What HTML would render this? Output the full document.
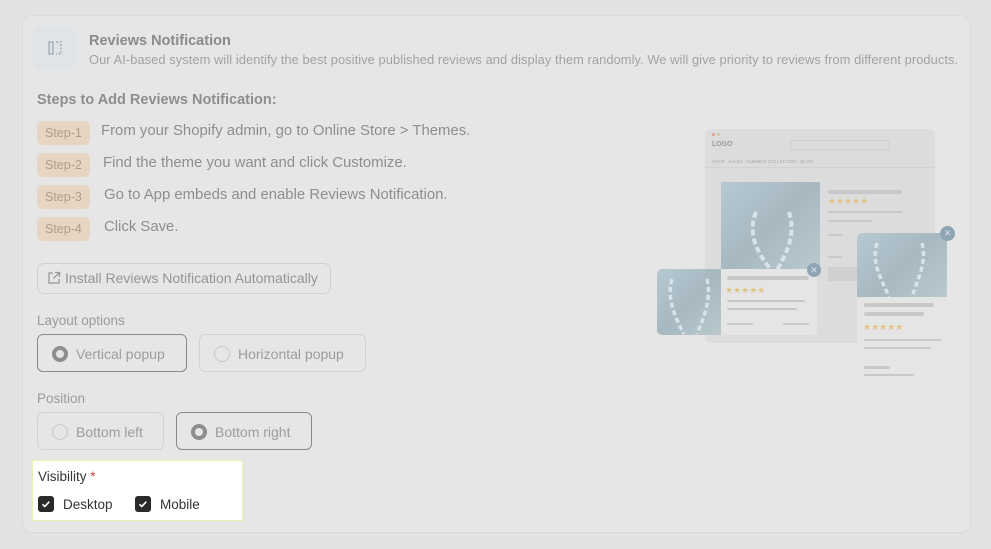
<!DOCTYPE html>
<html><head><meta charset="utf-8"><style>
*{box-sizing:border-box;margin:0;padding:0}
body{width:991px;height:549px;background:#e2e2e2;font-family:"Liberation Sans",sans-serif;position:relative;overflow:hidden;color:#8c8c8c}
.card{position:absolute;left:22px;top:15px;width:949px;height:518px;background:#e6e6e6;border:1px solid #dadada;border-radius:10px}
.abs{position:absolute}
.icon{left:33px;top:26px;width:44px;height:44px;border-radius:10px;background:#e1e4e6}
.title{left:89px;top:33px;font-size:14.5px;font-weight:bold;color:#8a8a8a}
.sub{left:89px;top:52px;font-size:12.86px;color:#a2a2a2;white-space:nowrap;letter-spacing:0.07px}
.steps{left:37px;top:92px;font-size:14.5px;font-weight:bold;color:#8e8e8e}
.step{left:37px;height:24px;padding:0 8px;line-height:24px;border-radius:6px;background:#e6d5c1;color:#ad9d8c;font-size:12.5px}
.st{font-size:14.9px;color:#8e8e8e;white-space:nowrap}
.btn{left:37px;top:263px;width:294px;height:31px;border:1px solid #d0d0d0;border-radius:7px;font-size:14px;color:#949494;line-height:29px;padding-left:27px}
.lbl{font-size:13.5px;color:#9a9a9a}
.opt{height:38px;border:1px solid #d2d2d2;border-radius:6px;font-size:14px;color:#9c9c9c;line-height:38px;padding-left:38px}
.opt.sel{border-color:#8a8a8a}
.opt i{position:absolute;left:14px;top:11px;width:16px;height:16px;border-radius:50%;border:1px solid #c8c8c8}
.opt.sel i{border:4px solid #8e8e8e;background:#e6e6e6}
.vis{left:32px;top:460px;width:211px;height:61px;background:#fff;border:1px solid #f0efb0}
.cb{position:absolute;width:16px;height:16px;border-radius:3px;background:#2a2a2a}
.bar{position:absolute;height:4px;background:#c8c8c8;border-radius:2px}
.star{position:absolute;color:#e0c48a;font-size:9px;letter-spacing:0}
.img{position:absolute;background:linear-gradient(135deg,#b6c9d2,#a7b8c1 50%,#b9c9cf);overflow:hidden}
</style></head><body>
<div class="card"></div>
<div class="abs icon"><svg width="44" height="44"><rect x="16" y="16" width="4" height="12" fill="none" stroke="#9fb0b8" stroke-width="1.4"/><path d="M23 16h5v12h-5" fill="none" stroke="#9fb0b8" stroke-width="1.4" stroke-dasharray="2 1.5"/></svg></div>
<div class="abs title">Reviews Notification</div>
<div class="abs sub">Our AI-based system will identify the best positive published reviews and display them randomly. We will give priority to reviews from different products.</div>
<div class="abs steps">Steps to Add Reviews Notification:</div>
<div class="abs step" style="top:121px">Step-1</div><div class="abs st" style="left:101px;top:123px">From your Shopify admin, go to Online Store &gt; Themes.</div>
<div class="abs step" style="top:153px">Step-2</div><div class="abs st" style="left:103px;top:155px">Find the theme you want and click Customize.</div>
<div class="abs step" style="top:185px">Step-3</div><div class="abs st" style="left:104px;top:187px">Go to App embeds and enable Reviews Notification.</div>
<div class="abs step" style="top:217px">Step-4</div><div class="abs st" style="left:104px;top:219px">Click Save.</div>
<div class="abs btn"><svg class="abs" style="left:9px;top:7px" width="14" height="14" viewBox="0 0 14 14" fill="none" stroke="#9a9a9a" stroke-width="1.3"><path d="M6 2H2v10h10V8M8 1.5h4.5V6M12.5 1.5L6.5 7.5"/></svg>Install Reviews Notification Automatically</div>
<div class="abs lbl" style="left:37px;top:313px">Layout options</div>
<div class="abs opt sel" style="left:37px;top:334px;width:150px"><i></i>Vertical popup</div>
<div class="abs opt" style="left:199px;top:334px;width:167px"><i></i>Horizontal popup</div>
<div class="abs lbl" style="left:37px;top:391px">Position</div>
<div class="abs opt" style="left:37px;top:412px;width:127px"><i></i>Bottom left</div>
<div class="abs opt sel" style="left:176px;top:412px;width:136px"><i></i>Bottom right</div>
<div class="abs vis">
<div class="abs" style="left:5px;top:8px;font-size:13.5px;color:#333">Visibility <span style="color:#c44">*</span></div>
<div class="cb" style="left:5px;top:35px"><svg width="16" height="16"><path d="M4.5 8.3l2.3 2.2 4.5-4.8" fill="none" stroke="#fff" stroke-width="1.6"/></svg></div>
<div class="abs" style="left:30px;top:36px;font-size:13.5px;color:#333">Desktop</div>
<div class="cb" style="left:102px;top:35px"><svg width="16" height="16"><path d="M4.5 8.3l2.3 2.2 4.5-4.8" fill="none" stroke="#fff" stroke-width="1.6"/></svg></div>
<div class="abs" style="left:127px;top:36px;font-size:13.5px;color:#333">Mobile</div>
</div>
<!-- mockup -->
<div class="abs" style="left:705px;top:129px;width:230px;height:214px;background:#dcdcdc;border-radius:6px">
<div class="abs" style="left:7px;top:4px;width:3px;height:3px;border-radius:50%;background:#d3a8a0"></div>
<div class="abs" style="left:12px;top:4px;width:3px;height:3px;border-radius:50%;background:#d3c4a0"></div>
<div class="abs" style="left:7px;top:12px;font-size:7px;color:#9a9a9a;font-weight:bold">LOGO</div>
<div class="abs" style="left:85px;top:11px;width:100px;height:10px;border:1px solid #d0d0d0;border-radius:2px"></div>
<div class="abs" style="left:7px;top:30px;font-size:4.5px;color:#aaa;white-space:nowrap">SHOP &nbsp; SALES &nbsp; SUMMER COLLECTION &nbsp; BLOG</div>
<div class="abs" style="left:0;top:38px;width:230px;height:1px;background:#d2d2d2"></div>
<div class="bar" style="left:123px;top:61px;width:74px"></div>
<div class="star" style="left:123px;top:67px">★★★★★</div>
<div class="bar" style="left:123px;top:82px;width:74px;height:2px"></div>
<div class="bar" style="left:123px;top:91px;width:44px;height:2px"></div>
<div class="bar" style="left:123px;top:105px;width:14px;height:2px"></div>
<div class="bar" style="left:123px;top:127px;width:14px;height:2px"></div>
<div class="abs" style="left:123px;top:138px;width:30px;height:14px;background:#d0d0d0"></div>
</div>
<div class="img" style="left:721px;top:182px;width:99px;height:88px"><svg width="99" height="88"><path d="M35 30c-10 25 5 45 15 58M68 30c8 25-5 45-12 58" fill="none" stroke="#d7e3e8" stroke-width="4" stroke-dasharray="6 3"/></svg></div>
<div class="abs" style="left:657px;top:269px;width:160px;height:66px;background:#e5e5e5;border-radius:5px">
<div class="img" style="left:0;top:0;width:64px;height:66px;border-radius:5px 0 0 5px"><svg width="64" height="66"><path d="M15 10c-6 20 4 40 12 55M50 10c5 20-4 40-10 55" fill="none" stroke="#d7e3e8" stroke-width="3.5" stroke-dasharray="5 3"/></svg></div>
<div class="bar" style="left:70px;top:7px;width:82px"></div>
<div class="star" style="left:68px;top:16px">★★★★★</div>
<div class="bar" style="left:70px;top:31px;width:78px;height:2px"></div>
<div class="bar" style="left:70px;top:39px;width:70px;height:2px"></div>
<div class="bar" style="left:70px;top:54px;width:26px;height:2px"></div>
<div class="bar" style="left:126px;top:54px;width:26px;height:2px"></div>
</div>
<div class="abs" style="left:807px;top:263px;width:14px;height:14px;border-radius:50%;background:#8fa6b2;color:#dde;font-size:9px;text-align:center;line-height:14px">✕</div>
<div class="abs" style="left:857px;top:233px;width:90px;height:150px;background:#e5e5e5;border-radius:5px">
<div class="img" style="left:0;top:0;width:90px;height:64px;border-radius:5px 5px 0 0"><svg width="90" height="64"><path d="M20 10c-6 20 4 35 12 54M65 10c5 20-4 35-10 54" fill="none" stroke="#d7e3e8" stroke-width="3.5" stroke-dasharray="5 3"/></svg></div>
<div class="bar" style="left:7px;top:70px;width:70px"></div>
<div class="bar" style="left:7px;top:79px;width:60px"></div>
<div class="star" style="left:6px;top:89px">★★★★★</div>
<div class="bar" style="left:7px;top:106px;width:77px;height:2px"></div>
<div class="bar" style="left:7px;top:114px;width:67px;height:2px"></div>
<div class="bar" style="left:7px;top:133px;width:26px;height:3px"></div>
<div class="bar" style="left:7px;top:141px;width:50px;height:2px"></div>
</div>
<div class="abs" style="left:940px;top:226px;width:15px;height:15px;border-radius:50%;background:#8fa6b2;color:#dde;font-size:9px;text-align:center;line-height:15px">✕</div>
</body></html>
